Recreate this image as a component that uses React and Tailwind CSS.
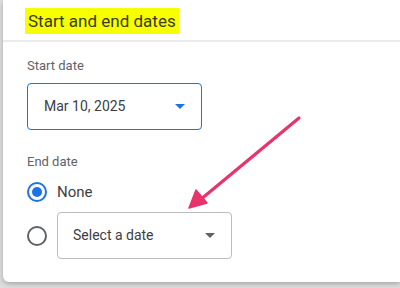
import React from "react";

function Caret({ color }) {
  return (
    <svg width="10" height="5" viewBox="0 0 10 5" className="shrink-0">
      <path d="M0 0 L10 0 L5 5 Z" fill={color} />
    </svg>
  );
}

export default function App() {
  return (
    <div className="relative w-[400px] h-[288px] bg-[#dedede] overflow-hidden" style={{ fontFamily: "Roboto, 'Liberation Sans', sans-serif" }}>
      <div className="ml-[3px] h-[282px] bg-white rounded-bl-[6px] shadow-[0_2px_5px_rgba(0,0,0,0.25)] flex flex-col">
        <div className="h-[42px] pl-[22px] pt-[8px] border-b-2 border-[#ebebeb]">
          <span className="inline-block bg-[#f7ff00] px-[3px] h-[26px] leading-[26px] text-[17px] text-[#3a3a20]">
            Start and end dates
          </span>
        </div>

        <div className="pl-[24px] pt-[16px]">
          <div className="text-[13px] text-[#5f6368] leading-[16px]">Start date</div>
          <div className="mt-[9px] w-[175px] h-[47px] border-[1.5px] border-[#1a73e8] rounded-[4px] flex items-center justify-between pl-[16px] pr-[16px]">
            <span className="text-[14px] text-[#3c4043]">Mar 10, 2025</span>
            <Caret color="#1a73e8" />
          </div>

          <div className="mt-[24px] text-[13px] text-[#5f6368] leading-[16px]">End date</div>

          <div className="mt-[12px] flex items-center gap-[10px] h-[20px]">
            <div className="w-[20px] h-[20px] rounded-full border-2 border-[#1a73e8] flex items-center justify-center">
              <div className="w-[10px] h-[10px] rounded-full bg-[#1a73e8]" />
            </div>
            <span className="text-[15px] text-[#3c4043]">None</span>
          </div>

          <div className="mt-[10px] flex items-center gap-[10px]">
            <div className="w-[20px] h-[20px] rounded-full border-2 border-[#5f6368]" />
            <div className="w-[175px] h-[47px] border border-[#bdbdbd] rounded-[4px] flex items-center justify-between pl-[15px] pr-[16px]">
              <span className="text-[14px] text-[#3c4043]">Select a date</span>
              <Caret color="#5f6368" />
            </div>
          </div>
        </div>
      </div>

      <svg className="absolute left-0 top-0 pointer-events-none" width="400" height="288">
        <line x1="299" y1="118" x2="200" y2="200" stroke="#e8336b" strokeWidth="3.2" strokeLinecap="round" />
        <path d="M189 208 L196 190 L207 203 Z" fill="#e8336b" stroke="#e8336b" strokeWidth="1.5" strokeLinejoin="round" />
      </svg>
    </div>
  );
}
